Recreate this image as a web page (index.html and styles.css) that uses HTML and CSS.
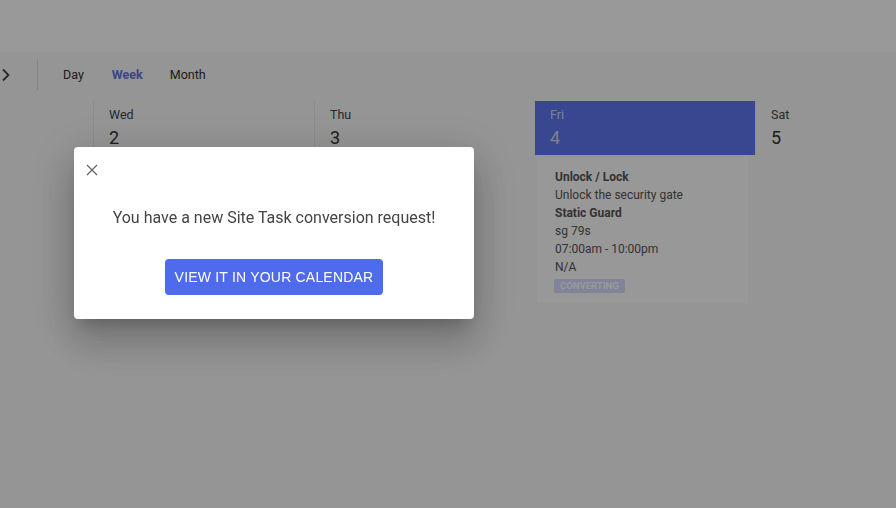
FILE: index.html
```html
<!DOCTYPE html>
<html lang="en">
<head>
<meta charset="utf-8">
<title>Calendar</title>
<link rel="stylesheet" href="styles.css">
</head>
<body>
<header class="topbar"></header>
<div class="toolbar">
  <button class="nav-btn" aria-label="Next">
    <svg width="14" height="14" viewBox="0 0 14 14"><path d="M4 1.5 L9.5 7 L4 12.5" fill="none" stroke="#444" stroke-width="1.8"/></svg>
  </button>
  <span class="divider"></span>
  <nav class="views">
    <span class="view">Day</span>
    <span class="view active">Week</span>
    <span class="view">Month</span>
  </nav>
</div>
<section class="week">
  <div class="gutter"></div>
  <div class="day">
    <div class="day-head"><div class="dname">Wed</div><div class="dnum">2</div></div>
  </div>
  <div class="day">
    <div class="day-head"><div class="dname">Thu</div><div class="dnum">3</div></div>
  </div>
  <div class="day today">
    <div class="day-head"><div class="dname">Fri</div><div class="dnum">4</div></div>
    <div class="event">
      <div class="ev-title">Unlock / Lock</div>
      <div>Unlock the security gate</div>
      <div class="ev-title">Static Guard</div>
      <div>sg 79s</div>
      <div>07:00am - 10:00pm</div>
      <div>N/A</div>
      <span class="badge">CONVERTING</span>
    </div>
  </div>
  <div class="day">
    <div class="day-head"><div class="dname">Sat</div><div class="dnum">5</div></div>
  </div>
</section>

<div class="backdrop">
  <div class="modal" role="dialog">
    <button class="close" aria-label="Close">
      <svg width="12" height="12" viewBox="0 0 12 12"><path d="M1 1 L11 11 M11 1 L1 11" stroke="#666" stroke-width="1.3" fill="none"/></svg>
    </button>
    <p class="message">You have a new Site Task conversion request!</p>
    <button class="cta">VIEW IT IN YOUR CALENDAR</button>
  </div>
</div>
</body>
</html>
```

FILE: styles.css
```css
* { box-sizing: border-box; }
html, body { height: 100%; }
body {
  margin: 0;
  background: #f8f8f8;
  font-family: Roboto, "Liberation Sans", sans-serif;
  color: #333;
  overflow: hidden;
}
.topbar {
  height: 52px;
  background: #ffffff;
}
.toolbar {
  height: 49px;
  padding-bottom: 4px;
  display: flex;
  align-items: center;
}
.nav-btn {
  width: 24px;
  height: 40px;
  margin-left: -6px;
  border: none;
  background: transparent;
  padding: 0;
  display: flex;
  align-items: center;
  justify-content: center;
}
.divider {
  width: 1px;
  height: 30px;
  background: #dcdcdc;
  margin-left: 19px;
}
.views {
  display: flex;
  margin-left: 11px;
}
.view {
  font-size: 12.5px;
  padding: 0 14px;
  color: #333;
}
.view:last-child { margin-left: -1px; }
.active {
  font-weight: 700;
  color: #6673e6;
}
.week {
  display: grid;
  grid-template-columns: 93px 221px 221px 220px 221px;
  height: 407px;
  overflow: hidden;
}
.day-head {
  height: 54px;
  padding: 7px 15px 0;
  border-left: 1px solid #ebebeb;
}
.dname {
  font-size: 12.5px;
  line-height: 14px;
  color: #444;
}
.dnum {
  font-size: 18px;
  line-height: 22px;
  margin-top: 5px;
  color: #333;
}
.today .day-head {
  background: #5f76f0;
  border-left: none;
}
.today .dname, .today .dnum { color: rgba(255,255,255,.72); }
.event {
  margin: 2px 7px 0 2px;
  background: #fdfdfd;
  padding: 11px 18px 9px;
  font-size: 12px;
  line-height: 18px;
  color: #555;
}
.ev-title { font-weight: 700; color: #555; }
.badge {
  display: inline-block;
  margin-top: 3px;
  margin-left: -1px;
  height: 14px;
  line-height: 14px;
  padding: 0 6px;
  font-size: 9.5px;
  font-weight: 700;
  color: #ffffff;
  background: #d5dbff;
  border-radius: 2px;
}
.backdrop {
  position: fixed;
  inset: 0;
  background: rgba(0,0,0,.4);
}
.modal {
  position: absolute;
  left: 74px;
  top: 147px;
  width: 400px;
  height: 172px;
  background: #fff;
  border-radius: 4px;
  padding: 11px 6px 24px;
  display: flex;
  flex-direction: column;
  align-items: center;
  box-shadow: 0 11px 15px -7px rgba(0,0,0,.2), 0 24px 38px 3px rgba(0,0,0,.14), 0 9px 46px 8px rgba(0,0,0,.12);
}
.close {
  align-self: flex-start;
  width: 24px;
  height: 24px;
  border: none;
  background: transparent;
  padding: 0;
  display: flex;
  align-items: center;
  justify-content: center;
}
.message {
  margin: 24px 0 0;
  font-size: 16px;
  line-height: 24px;
  color: #444;
}
.cta {
  margin-top: 29px;
  height: 36px;
  padding: 0 10px;
  border: none;
  border-radius: 4px;
  background: #4f6bed;
  color: #fff;
  font-family: "Liberation Sans", Arial, sans-serif;
  font-size: 14px;
  letter-spacing: 0.2px;
}
```
